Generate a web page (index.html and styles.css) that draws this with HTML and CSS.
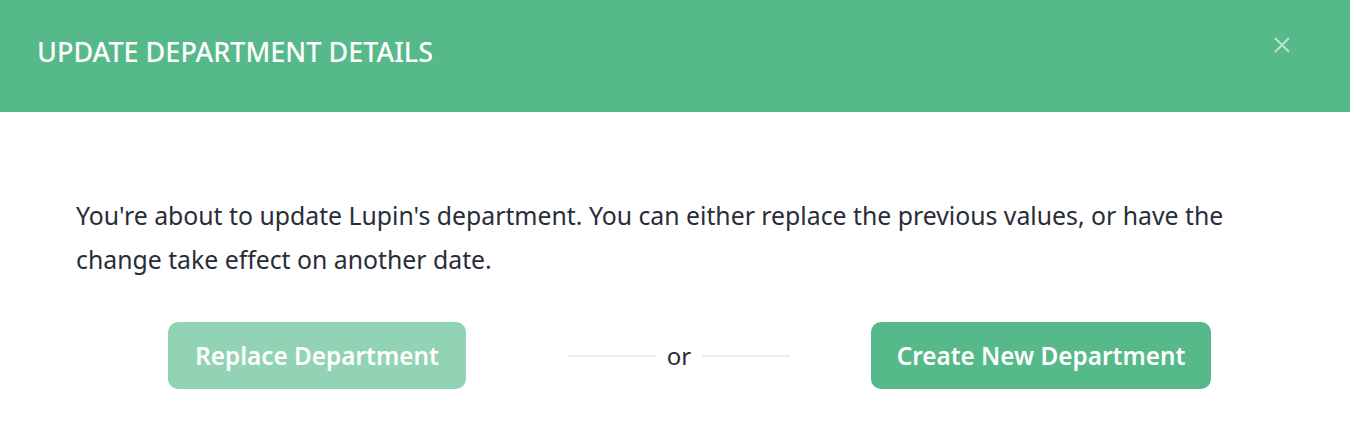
FILE: index.html
```html
<!DOCTYPE html>
<html>
<head>
<meta charset="utf-8">
<link rel="stylesheet" href="styles.css">
</head>
<body>
<div class="modal">
  <div class="modal-header">
    <h1 class="modal-title">UPDATE DEPARTMENT DETAILS</h1>
    <button class="close" aria-label="Close">
      <svg width="16" height="16" viewBox="0 0 16 16"><path d="M1.5 1.5 L14.5 14.5 M14.5 1.5 L1.5 14.5" stroke="currentColor" stroke-width="2" stroke-linecap="round"/></svg>
    </button>
  </div>
  <div class="modal-body">
    <p class="message">You're about to update Lupin's department. You can either replace the previous values, or have the change take effect on another date.</p>
    <div class="actions">
      <div class="cell"><button class="btn btn-light">Replace Department</button></div>
      <div class="cell"><div class="sep"><span class="line"></span><span class="or">or</span><span class="line"></span></div></div>
      <div class="cell"><button class="btn btn-primary">Create New Department</button></div>
    </div>
  </div>
</div>
</body>
</html>
```
FILE: styles.css
```css
* { box-sizing: border-box; }
html, body { margin: 0; padding: 0; background: #fff; }
body { font-family: "Noto Sans", "Open Sans", sans-serif; color: #282d38; }
.modal { width: 1350px; height: 446px; background: #fff; }
.modal-header {
  height: 112px;
  background: #56b98a;
  display: flex;
  align-items: center;
  justify-content: space-between;
  padding: 0 60px 0 37px;
}
.modal-title {
  margin: 0 0 9px;
  color: #fff;
  font-size: 27px;
  font-weight: 500;
  letter-spacing: 0;
}
.close {
  background: none;
  border: 0;
  padding: 0;
  color: rgba(255,255,255,0.6);
  display: flex;
  margin-top: -22px;
}
.modal-body { padding: 81px 76px 0; }
.message {
  margin: 0;
  font-size: 24.8px;
  line-height: 44px;
  max-width: 1165px;
}
.actions {
  margin-top: 41px;
  margin-left: 60px;
  display: grid;
  grid-template-columns: repeat(3, 362px);
  align-items: center;
}
.cell { display: flex; justify-content: center; }
.btn {
  font-family: inherit;
  border: 0;
  border-radius: 10px;
  height: 67px;
  color: #fff;
  font-size: 24.3px;
  font-weight: 600;
  padding: 0;
}
.btn-light { background: #93d3b5; width: 298px; }
.btn-primary { background: #56b98a; width: 340px; }
.sep { display: flex; align-items: center; gap: 11px; }
.line { width: 88px; height: 2px; background: #ececec; }
.or { font-size: 24px; color: #282d38; }
```
